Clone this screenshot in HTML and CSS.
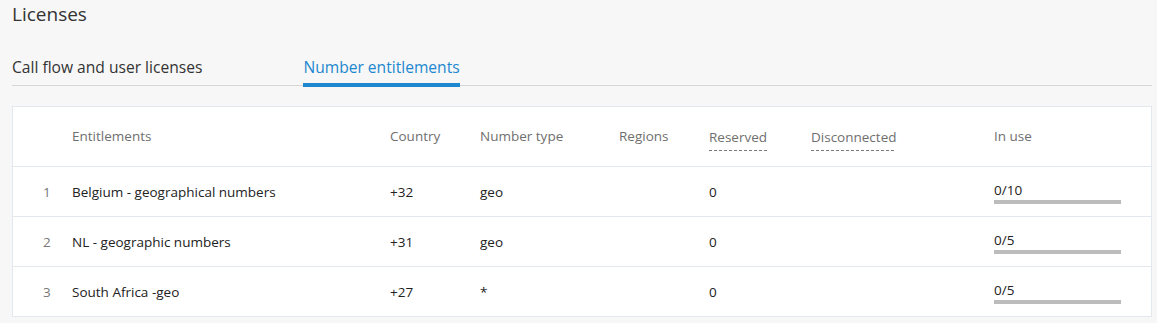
FILE: index.html
```html
<!DOCTYPE html>
<html>
<head>
    <title>Licenses</title>
    <link rel="stylesheet" href="styles.css">
</head>
<body>
    <h1 class="page-title">Licenses</h1>

    <div class="tabs">
        <div class="tab">Call flow and user licenses</div>
        <div class="tab tab-active">Number entitlements</div>
    </div>

    <div class="card">
        <table class="entitlements">
            <colgroup>
                <col style="width: 59px">
                <col style="width: 318px">
                <col style="width: 90px">
                <col style="width: 139px">
                <col style="width: 90px">
                <col style="width: 102px">
                <col style="width: 183px">
                <col style="width: 127px">
                <col>
            </colgroup>
            <thead>
                <tr>
                    <th></th>
                    <th>Entitlements</th>
                    <th>Country</th>
                    <th>Number type</th>
                    <th>Regions</th>
                    <th><span class="hint">Reserved</span></th>
                    <th><span class="hint">Disconnected</span></th>
                    <th>In use</th>
                    <th></th>
                </tr>
            </thead>
            <tbody>
                <tr>
                    <td class="row-index">1</td>
                    <td>Belgium - geographical numbers</td>
                    <td>+32</td>
                    <td>geo</td>
                    <td></td>
                    <td>0</td>
                    <td></td>
                    <td>
                        <div class="usage-text">0/10</div>
                        <div class="usage-bar"><div class="usage-fill" style="width: 0%"></div></div>
                    </td>
                    <td></td>
                </tr>
                <tr>
                    <td class="row-index">2</td>
                    <td>NL - geographic numbers</td>
                    <td>+31</td>
                    <td>geo</td>
                    <td></td>
                    <td>0</td>
                    <td></td>
                    <td>
                        <div class="usage-text">0/5</div>
                        <div class="usage-bar"><div class="usage-fill" style="width: 0%"></div></div>
                    </td>
                    <td></td>
                </tr>
                <tr>
                    <td class="row-index">3</td>
                    <td>South Africa -geo</td>
                    <td>+27</td>
                    <td>*</td>
                    <td></td>
                    <td>0</td>
                    <td></td>
                    <td>
                        <div class="usage-text">0/5</div>
                        <div class="usage-bar"><div class="usage-fill" style="width: 0%"></div></div>
                    </td>
                    <td></td>
                </tr>
            </tbody>
        </table>
    </div>
</body>
</html>
```

FILE: styles.css
```css
body {
    font-family: 'Open Sans', 'DejaVu Sans', sans-serif;
    margin: 0;
    padding: 0 5px 0 12px;
    background-color: #f7f7f7;
    color: #222222;
}

.page-title {
    margin: 0;
    font-size: 19px;
    font-weight: normal;
    line-height: 28px;
    color: #333333;
}

.tabs {
    display: flex;
    margin-top: 28px;
    border-bottom: 1px solid #d6d6d6;
}

.tab {
    font-size: 15.6px;
    line-height: 22px;
    padding-bottom: 5px;
    margin-bottom: -2px;
    border-bottom: 4px solid transparent;
    margin-right: 101px;
    color: #333333;
}

.tab-active {
    color: #1d88cf;
    border-bottom-color: #1d88cf;
}

.card {
    margin-top: 20px;
    background-color: #ffffff;
    border: 1px solid #e2e8ee;
}

.entitlements {
    width: 100%;
    border-collapse: collapse;
    table-layout: fixed;
    font-size: 13.5px;
}

.entitlements th {
    height: 57px;
    padding: 0 0 2px 0;
    text-align: left;
    font-weight: normal;
    color: #6f6f6f;
    border-bottom: 1px solid #e2e8ee;
}

.entitlements td {
    height: 49px;
    padding: 0;
    border-bottom: 1px solid #e2e8ee;
}

.entitlements tbody tr:last-child td {
    border-bottom: none;
}

.entitlements .row-index {
    padding-left: 30px;
    color: #777777;
}

.hint {
    display: inline-block;
    padding-bottom: 5px;
    background-image: repeating-linear-gradient(to right, #7a7a7a 0, #7a7a7a 3px, transparent 3px, transparent 5px);
    background-size: 100% 1px;
    background-repeat: no-repeat;
    background-position: left bottom;
    margin-top: 7px;
}

.usage-text {
    line-height: 16px;
    padding-top: 3px;
}

.usage-bar {
    height: 4px;
    margin-top: 2px;
    background-color: #bcbcbc;
}

.usage-fill {
    height: 100%;
    background-color: #1d88cf;
}
```
